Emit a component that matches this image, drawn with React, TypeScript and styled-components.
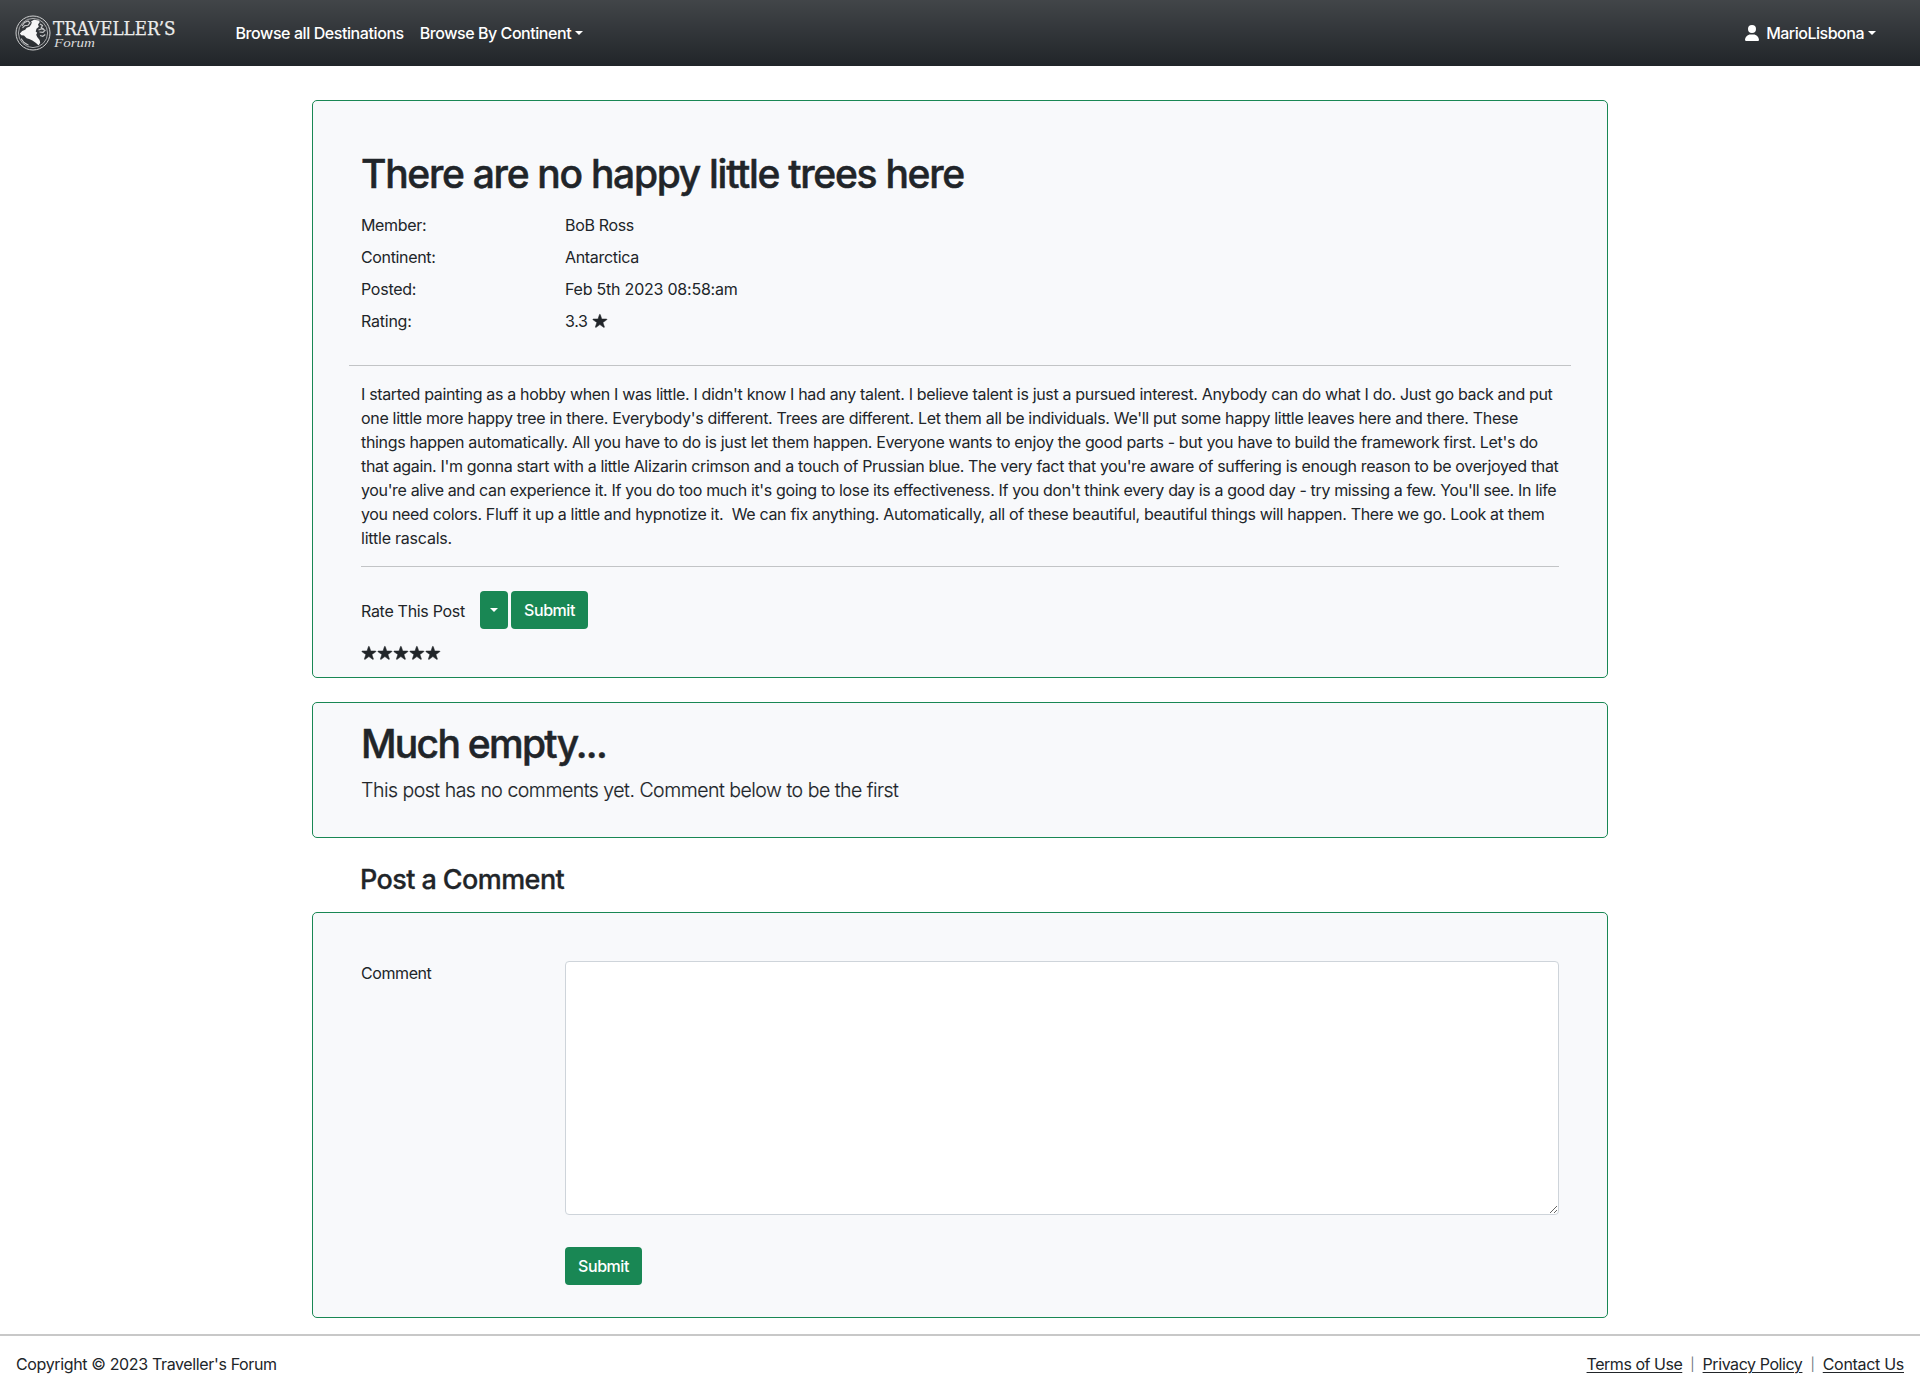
import React from "react";
import styled, { createGlobalStyle } from "styled-components";

const GlobalStyle = createGlobalStyle`
  *, *::before, *::after { box-sizing: border-box; }
  body {
    margin: 0;
    background: #fff;
    color: #212529;
    font-family: Inter, "Liberation Sans", sans-serif;
    font-size: 16px;
    line-height: 24px;
  }
`;

const Page = styled.div`
  display: flex;
  flex-direction: column;
  min-height: 1396px;
`;

const Navbar = styled.nav`
  display: flex;
  align-items: center;
  height: 66px;
  padding: 0 44px 0 12px;
  background: #212529 linear-gradient(180deg, rgba(255, 255, 255, 0.15), rgba(255, 255, 255, 0));
`;

const Brand = styled.a`
  display: flex;
  width: 166px;
  margin-right: 57.5px;
`;

const LogoArt = styled.svg`
  width: 166px;
  height: 42px;
  overflow: visible;
`;

const NavLinks = styled.div`
  display: flex;
  flex: 1;
  gap: 16px;
`;

const Tracked = styled.span<{ $spacing?: number }>`
  letter-spacing: ${(p) => p.$spacing ?? 0}px;
`;

const NavLink = styled.a`
  display: flex;
  align-items: center;
  color: #fff;
  font-weight: 500;
`;

const Caret = styled.span<{ $gap?: number }>`
  width: 0;
  height: 0;
  margin-left: ${(p) => p.$gap ?? 0}px;
  margin-bottom: 1px;
  border-top: 4px solid;
  border-right: 4px solid transparent;
  border-left: 4px solid transparent;
`;

const UserGlyph = styled.svg`
  width: 14px;
  height: 16px;
  margin-right: 7px;
  fill: currentColor;
`;

const Main = styled.main`
  display: flex;
  flex-direction: column;
  width: 1296px;
  margin: 34px auto 0;
`;

const Card = styled.section<{ $pad: string; $below?: number }>`
  padding: ${(p) => p.$pad};
  margin-bottom: ${(p) => p.$below ?? 0}px;
  background: #f8f9fb;
  border: 1px solid #198754;
  border-radius: 5px;
`;

const Title = styled.h1<{ $spacing: number }>`
  margin: 0 0 7px;
  padding-top: 1px;
  font-size: 39px;
  font-weight: 500;
  line-height: 48px;
  letter-spacing: ${(p) => p.$spacing}px;
  -webkit-text-stroke: 0.5px currentColor;
`;

const SectionTitle = styled.h3`
  margin: 0 0 15px;
  padding: 1px 0 0 48px;
  font-size: 27px;
  font-weight: 500;
  line-height: 34px;
  letter-spacing: -0.58px;
  -webkit-text-stroke: 0.3px currentColor;
`;

const Lead = styled.p`
  margin: 0;
  font-size: 19.5px;
  font-weight: 300;
  line-height: 30px;
  letter-spacing: -0.5px;
  -webkit-text-stroke: 0.15px currentColor;
`;

const Facts = styled.dl`
  display: grid;
  grid-template-columns: 204px 1fr;
  row-gap: 8px;
  margin: 0;
  padding: 8px 0 32px;
`;

const Term = styled.dt<{ $spacing: number }>`
  letter-spacing: ${(p) => p.$spacing}px;
`;

const Detail = styled.dd<{ $spacing: number }>`
  display: flex;
  align-items: center;
  gap: 4px;
  margin: 0;
  letter-spacing: ${(p) => p.$spacing}px;
`;

const Rule = styled.hr<{ $outset?: number }>`
  height: 1px;
  margin: 0 -${(p) => p.$outset ?? 0}px;
  border: 0;
  background: #c2c4c6;
`;

const Story = styled.p`
  margin: 0;
  padding: 16px 0;
  white-space: nowrap;
`;

const StoryLine = styled.span<{ $spacing: number }>`
  display: block;
  letter-spacing: ${(p) => p.$spacing}px;
`;

const RateRow = styled.div`
  display: flex;
  align-items: center;
  padding-top: 24px;
`;

const RateLabel = styled.label`
  width: 119px;
  padding-top: 2px;
  letter-spacing: -0.3px;
`;

const Button = styled.button<{ $width: number }>`
  display: flex;
  align-items: center;
  justify-content: center;
  width: ${(p) => p.$width}px;
  height: 38px;
  margin-right: 3px;
  padding: 0;
  color: #fff;
  background: #198754;
  border: 0;
  border-radius: 4px;
  font: 500 16px/24px Inter, "Liberation Sans", sans-serif;
  letter-spacing: -0.45px;
`;

const Stars = styled.div`
  display: flex;
  align-items: center;
  height: 24px;
  margin-top: 12px;
`;

const StarGlyph = styled.svg`
  width: 16px;
  height: 16px;
  fill: currentColor;
  stroke: currentColor;
  stroke-width: 18;
`;

const FormGrid = styled.form`
  display: grid;
  grid-template-columns: 204px 1fr;
  row-gap: 32px;
`;

const FieldLabel = styled.label`
  letter-spacing: -0.42px;
`;

const TextArea = styled.textarea`
  display: block;
  width: 100%;
  height: 254px;
  padding: 6px 12px;
  background: #fff;
  border: 1px solid #ced4da;
  border-radius: 4px;
  resize: vertical;
`;

const SubmitCell = styled.div`
  grid-column: 2;
`;

const Footer = styled.footer`
  display: flex;
  justify-content: space-between;
  margin-top: 16px;
  padding: 16px;
  border-top: 2px solid #c8c8c8;
`;

const FooterLinks = styled.div`
  display: flex;
`;

const FooterLink = styled.a<{ $spacing: number }>`
  color: #212529;
  text-decoration: underline;
  text-underline-offset: 2px;
  text-decoration-thickness: 1px;
  letter-spacing: ${(p) => p.$spacing}px;
`;

const Divider = styled.span`
  width: 20.3px;
  color: #6c757d;
  font-size: 13px;
  text-align: center;
`;

const Star = () => (
  <StarGlyph viewBox="-14 -14 548 548">
    <path d="M394 480a16 16 0 01-9.39-3L256 383.76 127.39 477a16 16 0 01-24.55-18.08L153 310.35 23 221.2a16 16 0 019-29.2h160.38l48.4-148.95a16 16 0 0130.44 0l48.4 149H480a16 16 0 019.05 29.2L359 310.35l50.13 148.53A16 16 0 01394 480z" />
  </StarGlyph>
);

const User = () => (
  <UserGlyph viewBox="0 0 448 512">
    <path d="M224 256a128 128 0 1 0 0-256 128 128 0 1 0 0 256zm-45.7 48C79.8 304 0 383.8 0 482.3 0 498.7 13.3 512 29.7 512h388.6c16.4 0 29.7-13.3 29.7-29.7C448 383.8 368.2 304 269.700 304h-91.4z" />
  </UserGlyph>
);

const Logo = () => (
  <LogoArt viewBox="0 0 166 42">
    <g transform="translate(-12 -12)">
      <circle cx="33" cy="33" r="17" fill="none" stroke="#cfd0d1" strokeWidth="1" />
      <circle cx="33" cy="33" r="14.6" fill="none" stroke="#b4b6b8" strokeWidth="0.9" />
      <path
        fill="#f6f6f6"
        d="M31 21.5l3-1.7 4.8.6 1 1.6-1.8 2.5.8 2.2-2.3 2-.8 2.7 1.5 1.3-1 2.1 1 2.2 2.4 3 .6 2.8-1.6 2.700-2.6-2.4-3.6-2.6-3.2-1.6-2.5-.6-2.7-2.8-2.7-.3-1.4-1.7 2.3-2.6 3-1.2 1.5-2 2.8-.9 1.6-2.2.7-2z"
      />
      <path
        fill="none"
        stroke="#c9cacb"
        strokeWidth="1.1"
        d="M22 26l2.5-3.5 3.500-1.5 2 1.800-2 2.400-3.500.6-2 2M40 24l2.500 1.500-1.200 2.200 2.500 1.200M38.500 30l3.500-1.300 3 1.700-2 2-3.500-.4M40 35.500l2.800.8 2.500-1.800M21 38.500l3 4 4.500 2.700"
      />
      <text x="53" y="34.5" fill="#ebebeb" stroke="#ebebeb" strokeWidth="0.25" fontFamily="DejaVu Serif" fontSize="18.5" textLength="122.5" lengthAdjust="spacingAndGlyphs">
        TRAVELLER’S
      </text>
      <text x="54" y="46.5" fill="#d8d9da" fontFamily="Liberation Serif" fontStyle="italic" fontSize="13" textLength="41" lengthAdjust="spacingAndGlyphs">
        Forum
      </text>
    </g>
  </LogoArt>
);

const story: [string, number][] = [
  ["I started painting as a hobby when I was little. I didn't know I had any talent. I believe talent is just a pursued interest. Anybody can do what I do. Just go back and put", -0.333],
  ["one little more happy tree in there. Everybody's different. Trees are different. Let them all be individuals. We'll put some happy little leaves here and there. These", -0.317],
  ["things happen automatically. All you have to do is just let them happen. Everyone wants to enjoy the good parts - but you have to build the framework first. Let's do", -0.338],
  ["that again. I'm gonna start with a little Alizarin crimson and a touch of Prussian blue. The very fact that you're aware of suffering is enough reason to be overjoyed that", -0.341],
  ["you're alive and can experience it. If you do too much it's going to lose its effectiveness. If you don't think every day is a good day - try missing a few. You'll see. In life", -0.355],
  ["you need colors. Fluff it up a little and hypnotize it. \u00a0We can fix anything. Automatically, all of these beautiful, beautiful things will happen. There we go. Look at them", -0.328],
  ["little rascals.", -0.213],
];

export default function App() {
  return (
    <Page>
      <GlobalStyle />
      <Navbar>
        <Brand>
          <Logo />
        </Brand>
        <NavLinks>
          <NavLink>
            <Tracked $spacing={-0.417}>Browse all Destinations</Tracked>
          </NavLink>
          <NavLink>
            <Tracked $spacing={-0.45}>Browse By Continent</Tracked>
            <Caret $gap={4} />
          </NavLink>
        </NavLinks>
        <NavLink>
          <User />
          <Tracked $spacing={-0.49}>MarioLisbona</Tracked>
          <Caret $gap={4} />
        </NavLink>
      </Navbar>

      <Main>
        <Card $pad="48px 48px 12px" $below={24}>
          <Title $spacing={-1.29}>There are no happy little trees here</Title>
          <Facts>
            <Term $spacing={-0.34}>Member:</Term>
            <Detail $spacing={-0.34}>BoB Ross</Detail>
            <Term $spacing={-0.35}>Continent:</Term>
            <Detail $spacing={-0.317}>Antarctica</Detail>
            <Term $spacing={-0.26}>Posted:</Term>
            <Detail $spacing={-0.22}>Feb 5th 2023 08:58:am</Detail>
            <Term $spacing={-0.23}>Rating:</Term>
            <Detail $spacing={-0.35}>
              3.3
              <Star />
            </Detail>
          </Facts>
          <Rule $outset={12} />
          <Story>
            {story.map(([line, spacing]) => (
              <StoryLine key={line} $spacing={spacing}>
                {line}
              </StoryLine>
            ))}
          </Story>
          <Rule />
          <RateRow>
            <RateLabel>Rate This Post</RateLabel>
            <Button $width={28}>
              <Caret />
            </Button>
            <Button $width={77}>Submit</Button>
          </RateRow>
          <Stars>
            {[1, 2, 3, 4, 5].map((n) => (
              <Star key={n} />
            ))}
          </Stars>
        </Card>

        <Card $pad="16px 48px 32px" $below={24}>
          <Title $spacing={-1.72}>Much empty...</Title>
          <Lead>This post has no comments yet. Comment below to be the first</Lead>
        </Card>

        <SectionTitle>Post a Comment</SectionTitle>

        <Card $pad="48px 48px 32px">
          <FormGrid>
            <FieldLabel>Comment</FieldLabel>
            <TextArea />
            <SubmitCell>
              <Button $width={77}>Submit</Button>
            </SubmitCell>
          </FormGrid>
        </Card>
      </Main>

      <Footer>
        <Tracked $spacing={-0.36}>Copyright © 2023 Traveller's Forum</Tracked>
        <FooterLinks>
          <FooterLink $spacing={-0.47}>Terms of Use</FooterLink>
          <Divider>|</Divider>
          <FooterLink $spacing={-0.43}>Privacy Policy</FooterLink>
          <Divider>|</Divider>
          <FooterLink $spacing={-0.3}>Contact Us</FooterLink>
        </FooterLinks>
      </Footer>
    </Page>
  );
}
